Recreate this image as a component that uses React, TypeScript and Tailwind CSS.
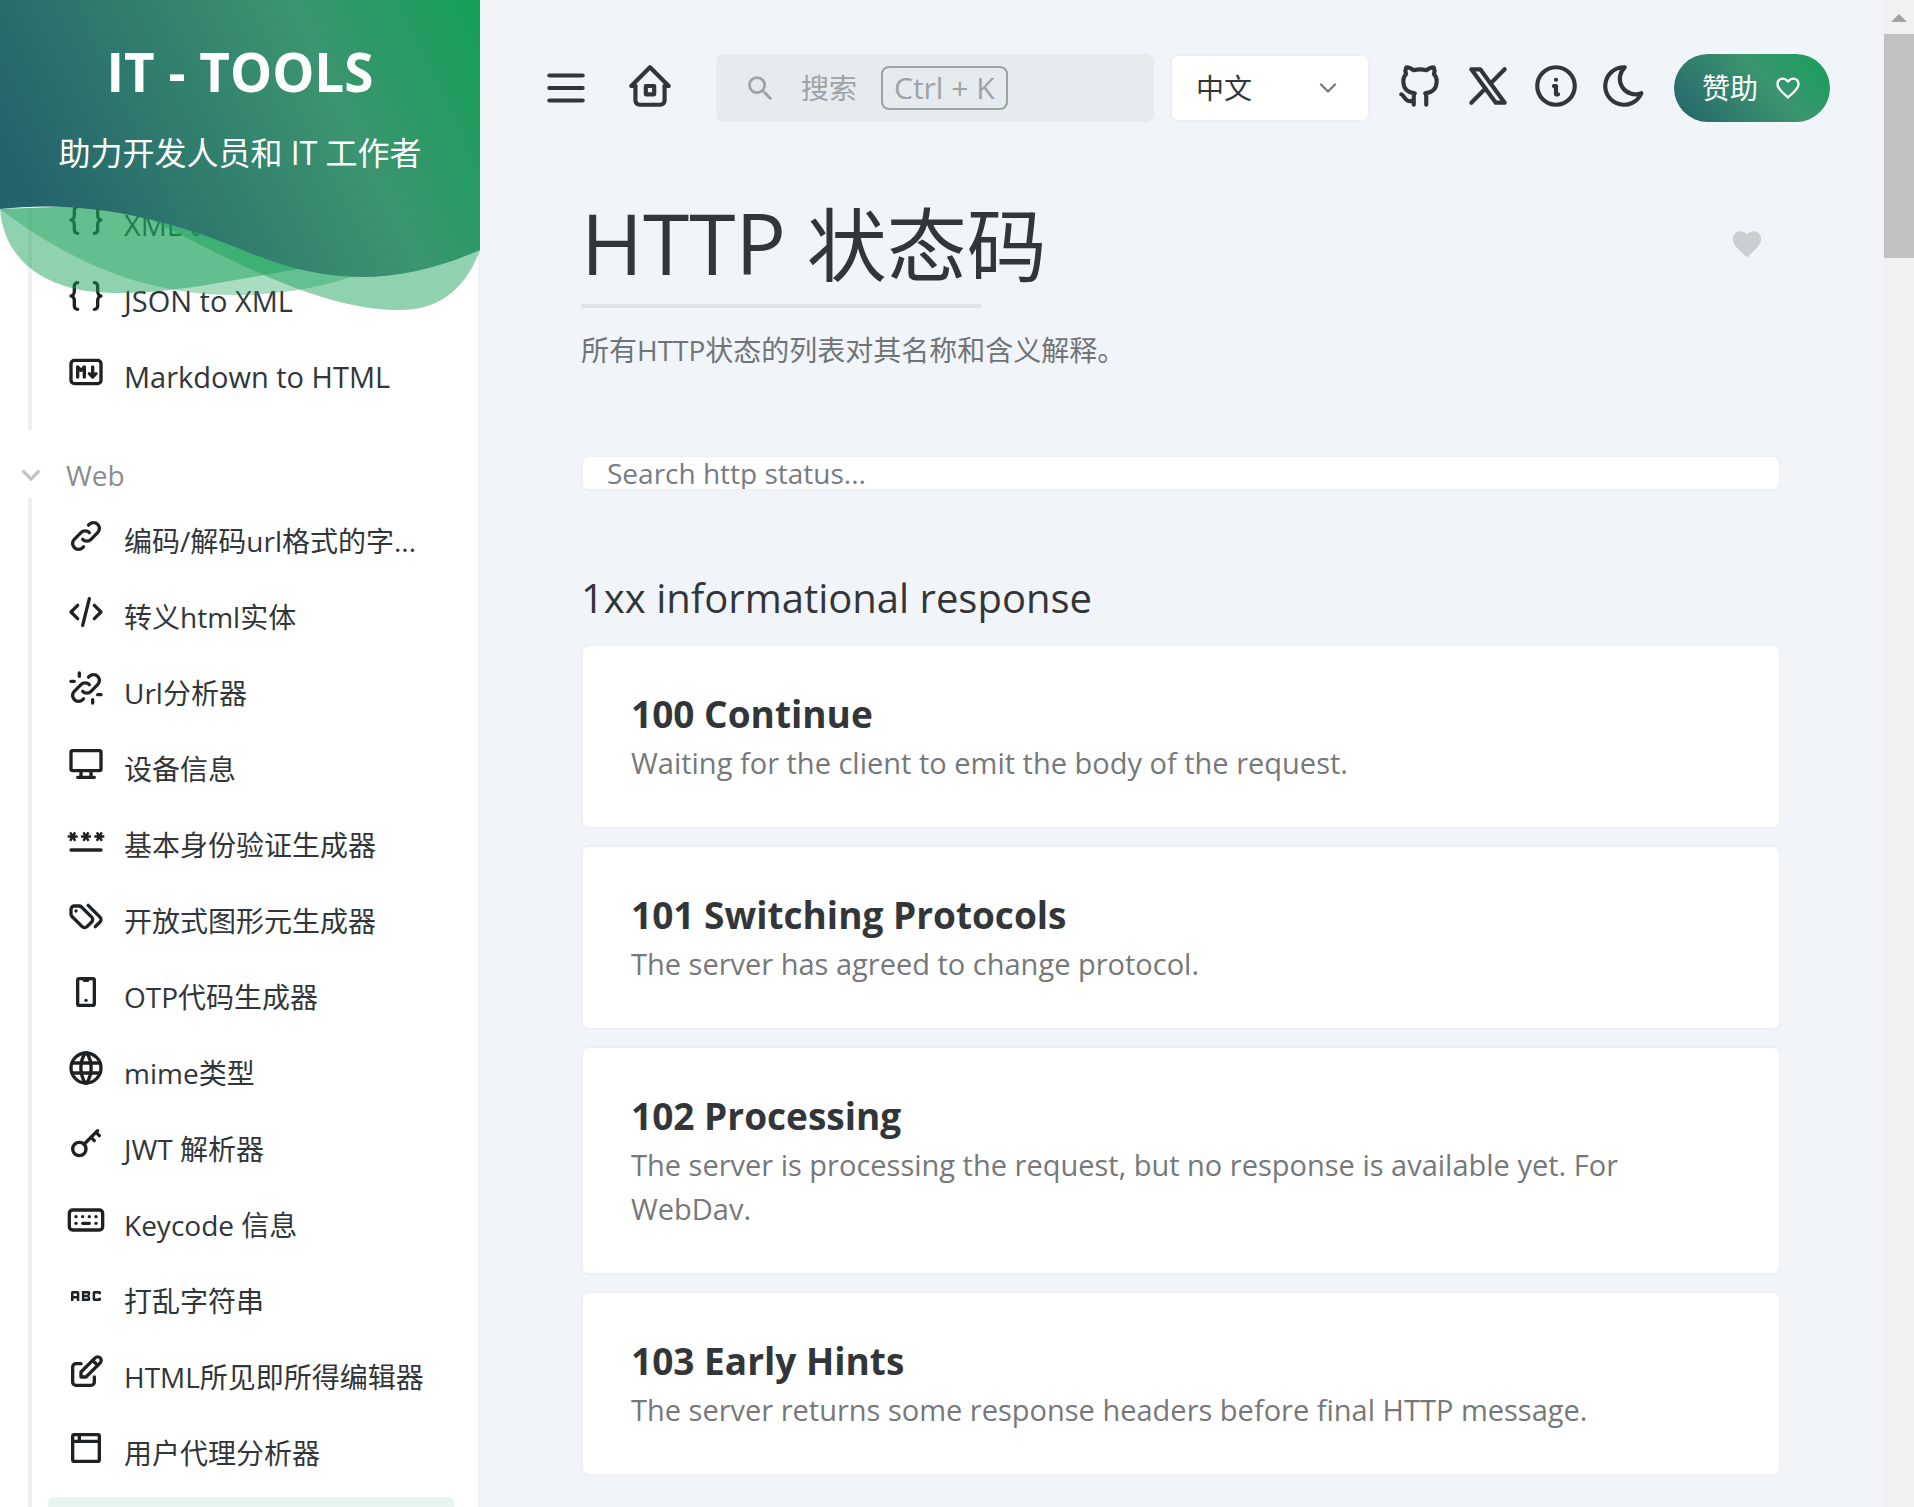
import type { ReactNode } from 'react'
import {
  TbBraces,
  TbBrandGithub,
  TbBrandX,
  TbChevronDown,
  TbCode,
  TbDeviceDesktop,
  TbHome2,
  TbInfoCircle,
  TbKeyboard,
  TbMarkdown,
  TbMenu2,
  TbMoon,
  TbWorld,
} from 'react-icons/tb'
import { MdAbc, MdExpandMore, MdFavorite, MdFavoriteBorder, MdSearch } from 'react-icons/md'

interface Tool {
  name: string
  icon: ReactNode
  active?: boolean
}

interface Status {
  code: number
  name: string
  description: string
}

/* ==========================================================================
   ICONS
   ========================================================================== */

function StrokeIcon({ paths }: { paths: string[] }) {
  return (
    <svg
      viewBox="0 0 24 24"
      className="size-10"
      fill="none"
      stroke="currentColor"
      strokeWidth="2"
      strokeLinecap="round"
      strokeLinejoin="round"
      aria-hidden="true"
    >
      {paths.map((d) => (
        <path key={d} d={d} />
      ))}
    </svg>
  )
}

const linkPaths = [
  'M10 14a3.5 3.5 0 0 0 5 0l4 -4a3.5 3.5 0 0 0 -5 -5l-.5 .5',
  'M14 10a3.5 3.5 0 0 0 -5 0l-4 4a3.5 3.5 0 0 0 5 5l.5 -.5',
]
const unlinkPaths = [...linkPaths, 'M16 21v-2', 'M19 16h2', 'M3 8h2', 'M8 3v2']
const tagsPaths = [
  'M7.859 6h-2.834a2.025 2.025 0 0 0 -2.025 2.025v2.834c0 .537 .213 1.052 .593 1.432l6.116 6.116a2.025 2.025 0 0 0 2.864 0l2.834 -2.834a2.025 2.025 0 0 0 0 -2.864l-6.117 -6.116a2.025 2.025 0 0 0 -1.431 -.593z',
  'M17.573 18.407l2.834 -2.834a2.025 2.025 0 0 0 0 -2.864l-7.117 -7.116',
  'M6 9h-.01',
]
const mobilePaths = [
  'M8 4h8a1 1 0 0 1 1 1v14a1 1 0 0 1 -1 1h-8a1 1 0 0 1 -1 -1v-14a1 1 0 0 1 1 -1z',
  'M11 5h2',
  'M12 17v.01',
]
const keyPaths = ['M8 15m-4 0a4 4 0 1 0 8 0a4 4 0 1 0 -8 0', 'M10.85 12.15l8.15 -8.15', 'M18 5l2 2', 'M15 8l2 2']
const editPaths = [
  'M9 7h-3a2 2 0 0 0 -2 2v9a2 2 0 0 0 2 2h9a2 2 0 0 0 2 -2v-3',
  'M9 15h3l8.5 -8.5a1.5 1.5 0 0 0 -3 -3l-8.5 8.5v3',
  'M16 5l3 3',
]
const browserPaths = [
  'M5 4h14a1 1 0 0 1 1 1v14a1 1 0 0 1 -1 1h-14a1 1 0 0 1 -1 -1v-14a1 1 0 0 1 1 -1z',
  'M4 8h16',
  'M8 4v4',
]

function PasswordIcon() {
  return (
    <svg viewBox="0 0 24 24" className="size-10" fill="currentColor" aria-hidden="true">
      <path d="M3 17h18a1 1 0 0 1 0 2H3a1 1 0 0 1 0-2z" />
      <path d="M3.15 12.95L4 11.47l.85 1.48 1.3-.75-.85-1.48H7v-1.5H5.3l.85-1.47L4.85 7 4 8.47 3.15 7l-1.3.75.85 1.47H1v1.5h1.7l-.85 1.48 1.3.75zm6.7-.75l1.3.75.85-1.48.85 1.48 1.3-.75-.85-1.48H15v-1.5h-1.7l.85-1.47-1.3-.75L12 8.47 11.15 7l-1.3.75.85 1.47H9v1.5h1.7l-.85 1.48zM23 9.22h-1.7l.85-1.47-1.3-.75L20 8.47 19.15 7l-1.3.75.85 1.47H17v1.5h1.7l-.85 1.48 1.3.75.85-1.48.85 1.48 1.3-.75-.85-1.48H23v-1.5z" />
    </svg>
  )
}

/* ==========================================================================
   DATA
   ========================================================================== */

const converterTools: Tool[] = [
  { name: 'XML to JSON', icon: <TbBraces className="size-10" /> },
  { name: 'JSON to XML', icon: <TbBraces className="size-10" /> },
  { name: 'Markdown to HTML', icon: <TbMarkdown className="size-10" /> },
]

const webTools: Tool[] = [
  { name: '编码/解码url格式的字...', icon: <StrokeIcon paths={linkPaths} /> },
  { name: '转义html实体', icon: <TbCode className="size-10" /> },
  { name: 'Url分析器', icon: <StrokeIcon paths={unlinkPaths} /> },
  { name: '设备信息', icon: <TbDeviceDesktop className="size-10" /> },
  { name: '基本身份验证生成器', icon: <PasswordIcon /> },
  { name: '开放式图形元生成器', icon: <StrokeIcon paths={tagsPaths} /> },
  { name: 'OTP代码生成器', icon: <StrokeIcon paths={mobilePaths} /> },
  { name: 'mime类型', icon: <TbWorld className="size-10" /> },
  { name: 'JWT 解析器', icon: <StrokeIcon paths={keyPaths} /> },
  { name: 'Keycode 信息', icon: <TbKeyboard className="size-10" /> },
  { name: '打乱字符串', icon: <MdAbc className="size-10" /> },
  { name: 'HTML所见即所得编辑器', icon: <StrokeIcon paths={editPaths} /> },
  { name: '用户代理分析器', icon: <StrokeIcon paths={browserPaths} /> },
  { name: 'HTTP 状态码', icon: <TbCode className="size-10" />, active: true },
]

const statuses: Status[] = [
  { code: 100, name: 'Continue', description: 'Waiting for the client to emit the body of the request.' },
  { code: 101, name: 'Switching Protocols', description: 'The server has agreed to change protocol.' },
  {
    code: 102,
    name: 'Processing',
    description: 'The server is processing the request, but no response is available yet. For WebDav.',
  },
  {
    code: 103,
    name: 'Early Hints',
    description: 'The server returns some response headers before final HTTP message.',
  },
]

/* ==========================================================================
   SIDEBAR
   ========================================================================== */

function Hero() {
  return (
    <a href="#" className="absolute inset-x-0 top-0 z-10 block text-center text-white">
      <svg viewBox="0 0 480 312" className="w-full" aria-hidden="true">
        <defs>
          <linearGradient id="hero" gradientUnits="userSpaceOnUse" x1="20" y1="170" x2="460" y2="-40">
            <stop offset="0" stopColor="#25636c" />
            <stop offset="0.65" stopColor="#3b956f" />
            <stop offset="1" stopColor="#14a058" />
          </linearGradient>
        </defs>
        <path d="M0 209C4 262 48 293 115 293C180 293 235 279 300 269L250 200Z" fill="#18a058" fillOpacity="0.48" />
        <path d="M0 209C60 254 135 295 233 295C285 295 325 286 357 275L250 200Z" fill="#18a058" fillOpacity="0.37" />
        <path d="M140 214C230 260 320 310 400 310C440 310 466 288 480 250V200Z" fill="#18a058" fillOpacity="0.48" />
        <path d="M0 0H480V250C400 285 330 286 250 253C160 215 80 200 0 209Z" fill="url(#hero)" />
      </svg>
      <div className="absolute inset-x-0 top-10">
        <div className="text-[53px] leading-[64px] font-bold">IT - TOOLS</div>
        <div className="mt-6 text-[32px] leading-[50px]">助力开发人员和 IT 工作者</div>
      </div>
    </a>
  )
}

function ToolList({ tools }: { tools: Tool[] }) {
  return (
    <ul className="relative pr-6 pl-12">
      <li className="absolute inset-y-0 left-7 w-1 rounded-full bg-[#f0f0f0]" aria-hidden="true" />
      {tools.map((tool) => (
        <li key={tool.name} className="pt-3">
          <a
            href="#"
            className={`flex h-16 items-start gap-[18px] rounded-md px-[18px] py-[7px] text-[#1f2225] ${
              tool.active ? 'bg-[#e7f5ee]' : ''
            }`}
          >
            <span className="shrink-0">{tool.icon}</span>
            <span className="text-[28px] leading-[50px] whitespace-nowrap text-[#333639]">{tool.name}</span>
          </a>
        </li>
      ))}
    </ul>
  )
}

function Sidebar() {
  return (
    <aside className="relative w-[480px] shrink-0 overflow-hidden bg-white">
      <Hero />
      <nav className="border-r-2 border-[#efeff5] pt-[181px]">
        <div className="text-[29px] [&_span]:text-[29px] [&>ul]:pb-[22px]">
          <ToolList tools={converterTools} />
        </div>
        <button className="mt-[22px] mb-px flex h-[43px] w-full items-center gap-4 pl-3 text-[28px] text-[#8b8d8f]">
          <MdExpandMore className="size-[38px] text-[#c2c2c2]" />
          Web
        </button>
        <ToolList tools={webTools} />
      </nav>
    </aside>
  )
}

/* ==========================================================================
   TOP BAR
   ========================================================================== */

function IconButton({ label, children }: { label: string; children: ReactNode }) {
  return (
    <button aria-label={label} className="flex size-[68px] shrink-0 items-center justify-center rounded-full pb-1">
      {children}
    </button>
  )
}

function TopBar() {
  return (
    <header className="flex items-center gap-4">
      <button aria-label="Toggle menu" className="flex size-[68px] shrink-0 items-center justify-center">
        <TbMenu2 className="size-[50px]" />
      </button>
      <IconButton label="Home">
        <TbHome2 className="size-[50px]" />
      </IconButton>

      <button className="ml-4 flex h-[68px] flex-1 items-center rounded-lg bg-[#e6ebee] pl-7 text-[28px] text-[#9ea2a5]">
        <MdSearch className="size-[33px]" />
        <span className="ml-6">搜索</span>
        <span className="ml-6 rounded-lg border-2 border-[#9ea2a5] px-[11px] text-[30px] leading-[40px]">Ctrl + K</span>
      </button>

      <div className="relative h-[68px] w-[200px] shrink-0">
        <select
          aria-label="Language"
          className="size-full appearance-none rounded-lg border-2 border-[#efeff5] bg-white pl-6 text-[28px]"
        >
          <option>中文</option>
        </select>
        <TbChevronDown className="pointer-events-none absolute top-5 right-7 size-7 text-[#767c82]" />
      </div>

      <div className="flex">
        <IconButton label="GitHub">
          <TbBrandGithub className="size-[50px]" />
        </IconButton>
        <IconButton label="X">
          <TbBrandX className="size-[50px]" />
        </IconButton>
        <IconButton label="About">
          <TbInfoCircle className="size-[50px]" />
        </IconButton>
        <IconButton label="Dark mode">
          <TbMoon className="size-[50px]" />
        </IconButton>
      </div>

      <a
        href="#"
        className="flex h-[68px] shrink-0 items-center gap-4 rounded-full bg-[linear-gradient(48deg,#25636c_0%,#3b956f_60%,#14a058_100%)] px-7 text-[28px] text-white"
      >
        赞助
        <MdFavoriteBorder className="size-7" />
      </a>
    </header>
  )
}

/* ==========================================================================
   STATUS CARD
   ========================================================================== */

function StatusCard({ status }: { status: Status }) {
  return (
    <article className="rounded-lg border-2 border-[#efeff5] bg-white px-12 pt-[46px] pb-[42px]">
      <h3 className="text-[37px] leading-[44px] font-bold">
        {status.code} {status.name}
      </h3>
      <p className="mt-[5px] text-[29px] leading-[44px] text-[#767879]">{status.description}</p>
    </article>
  )
}

/* ==========================================================================
   PAGE
   ========================================================================== */

export default function App() {
  return (
    <div className="flex h-screen overflow-hidden bg-[#f1f5f9] font-['Open_Sans','Noto_Sans_CJK_SC',sans-serif] text-[#333639]">
      <Sidebar />

      <main className="min-w-0 flex-1 overflow-hidden px-[52px] pt-[54px]">
        <TopBar />

        <div className="mx-auto mt-[74px] max-w-[1200px]">
          {/* Tool header */}
          <div className="flex items-center justify-between">
            <h1 className="text-[80px] leading-[96px]">
              <span className="text-[84px] leading-none font-medium">HTTP</span> 状态码
            </h1>
            <button aria-label="Add to favorites" className="flex size-[68px] items-center justify-center text-[#cccfd2]">
              <MdFavorite className="size-[34px]" />
            </button>
          </div>
          <div className="mt-3 h-1 w-[400px] bg-[#dfe3e6]" />
          <p className="mt-5 text-[28px] leading-[44px] text-[#717476]">所有HTTP状态的列表对其名称和含义解释。</p>

          <input
            type="text"
            aria-label="Search http status"
            placeholder="Search http status..."
            className="mt-[83px] block h-9 w-full rounded-lg border-2 border-[#efeff5] bg-white px-6 text-[28px] leading-8 placeholder:text-[#757c84]"
          />

          <h2 className="mt-[77px] text-[40px] leading-[60px]">1xx informational response</h2>
          <div className="mt-4 flex flex-col gap-4">
            {statuses.map((status) => (
              <StatusCard key={status.code} status={status} />
            ))}
          </div>
        </div>
      </main>

      {/* Scroll track */}
      <div className="flex w-8 shrink-0 flex-col bg-[#f1f1f1] pl-0.5" aria-hidden="true">
        <div className="flex h-[34px] items-center justify-center pt-0.5">
          <svg viewBox="0 0 16 8" className="h-2 w-4">
            <path d="M8 0L16 8H0Z" fill="#a3a3a3" />
          </svg>
        </div>
        <div className="h-56 bg-[#c1c1c1]" />
      </div>
    </div>
  )
}
